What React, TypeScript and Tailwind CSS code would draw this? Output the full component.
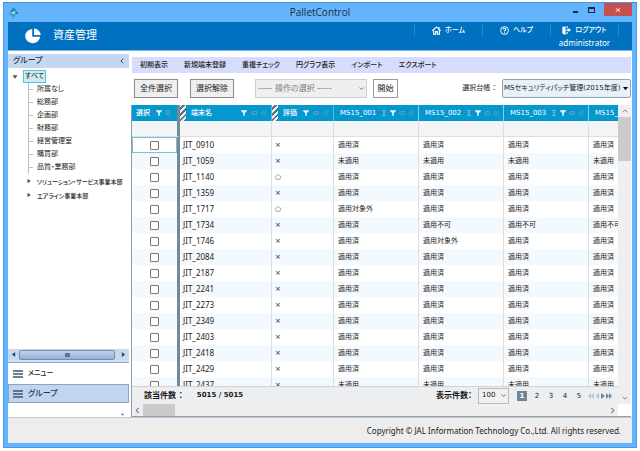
import type { ReactNode } from "react";

type Terminal = {
  name: string;
  rating: string;
  patches: string[];
};

const OK = "適用済";
const NOT_YET = "未適用";
const EXEMPT = "適用対象外";
const BLOCKED = "適用不可";

const allOk = (name: string): Terminal => ({ name, rating: "×", patches: [OK, OK, OK, OK] });

const terminals: Terminal[] = [
  allOk("JIT_0910"),
  { name: "JIT_1059", rating: "×", patches: [NOT_YET, NOT_YET, NOT_YET, NOT_YET] },
  { name: "JIT_1140", rating: "○", patches: [OK, OK, OK, OK] },
  allOk("JIT_1359"),
  { name: "JIT_1717", rating: "○", patches: [EXEMPT, OK, OK, OK] },
  { name: "JIT_1734", rating: "×", patches: [OK, BLOCKED, BLOCKED, BLOCKED] },
  { name: "JIT_1746", rating: "×", patches: [OK, EXEMPT, OK, OK] },
  allOk("JIT_2084"),
  allOk("JIT_2187"),
  allOk("JIT_2241"),
  allOk("JIT_2273"),
  allOk("JIT_2349"),
  allOk("JIT_2403"),
  allOk("JIT_2418"),
  allOk("JIT_2429"),
  { name: "JIT_2437", rating: "×", patches: [NOT_YET, NOT_YET, NOT_YET, NOT_YET] },
];

const departments = ["所属なし", "総務部", "企画部", "財務部", "経営管理室", "購買部", "品質・業務部"];
const divisions = ["ソリューション・サービス事業本部", "エアライン事業本部"];
const menuItems = ["初期表示", "新規端末登録", "重複チェック", "円グラフ表示", "インポート", "エクスポート"];
const patchColumns = ["MS15_001", "MS15_002", "MS15_003", "MS15_004"];

const Chevron = ({ d, className }: { d: string; className: string }) => (
  <svg viewBox="0 0 8 8" className={className} fill="none" stroke="currentColor" strokeWidth="1.2" aria-hidden="true">
    <path d={d} />
  </svg>
);

const AppIcon = () => (
  <svg viewBox="0 0 12 12" className="h-[11px] w-[11px]" aria-hidden="true">
    <path d="M6 0.5 10 4H7.5Q5.5 4 4.5 6L2.5 4.5Z" fill="#2587b5" />
    <path d="M0.8 5 4 7.8Q5.5 8.5 7 7L9.3 8.3 6 11.5 2 8.5Z" fill="#3c9cc4" />
    <path d="M8.5 4.5 11.5 6.5 9.8 8 7.5 6.5Z" fill="#1a76a8" />
    <circle cx="6.3" cy="6" r="1.2" fill="#d5effa" />
  </svg>
);

const PieIcon = () => (
  <svg viewBox="0 0 16 16" className="h-4 w-4" fill="#fff" aria-hidden="true">
    <path d="M7.2 0.9V8.8H15.2A7.5 7.2 0 1 1 7.2 0.9Z" />
    <path d="M9 0.6A6.8 6.6 0 0 1 15.6 7H9Z" />
  </svg>
);

const HomeIcon = () => (
  <svg viewBox="0 0 12 12" className="h-[9px] w-[9px]" fill="none" stroke="#fff" strokeWidth="1.5" aria-hidden="true">
    <path d="M0.5 6.3 6 1.2 11.5 6.3M2.2 5.5V11H4.8V7.5H7.2V11H9.8V5.5M9.3 3.8V1.3" />
  </svg>
);

const HelpIcon = () => (
  <svg viewBox="0 0 12 12" className="h-[9px] w-[9px]" fill="none" stroke="#fff" aria-hidden="true">
    <circle cx="6" cy="6" r="5.2" strokeWidth="1.3" />
    <path d="M4.2 4.6Q4.3 3 6 3T7.8 4.6Q7.8 5.6 6 6.2V7.4M6 8.2V9.5" strokeWidth="1.4" />
  </svg>
);

const LogoutIcon = () => (
  <svg viewBox="0 0 12 12" className="h-[9px] w-[9px]" fill="#fff" aria-hidden="true">
    <path d="M0.5 0.5 4.8 2V12L0.5 10Z" />
    <path d="M2 0.5H8V3H7V1.5H4ZM5 9H7V7.5H8V10H5Z" />
    <path d="M5.8 4.3H8.6V2.6L12 5.2 8.6 7.9V6.2H5.8Z" />
  </svg>
);

const FilterIcon = () => (
  <svg viewBox="0 0 6 6" className="h-[6px] w-[6px]" fill="#e4f3fa" aria-hidden="true">
    <path d="M0 0.3H6V1L3.8 3V5.8H2.2V3L0 1Z" />
  </svg>
);

const PinIcon = () => (
  <svg viewBox="0 0 6 6" className="h-[6px] w-[6px]" fill="none" stroke="#6c9fb5" strokeWidth="0.9" aria-hidden="true">
    <path d="M0 3H2M2 1.5V4.5H5.5V1.5Z" />
  </svg>
);

const UprightPinIcon = () => (
  <svg viewBox="0 0 6 6" className="h-[6px] w-[6px]" fill="none" stroke="#6c9fb5" strokeWidth="0.9" aria-hidden="true">
    <path d="M1.5 0.5H4.5V4H1.5ZM3 4V6" />
  </svg>
);

const CollapseIcon = () => (
  <svg viewBox="0 0 6 6" className="h-[6px] w-[6px]" fill="none" stroke="#6c9fb5" strokeWidth="0.9" aria-hidden="true">
    <path d="M3 0.5 0.8 3 3 5.5M5.7 0.5 3.5 3 5.7 5.5" />
  </svg>
);

const SumIcon = () => (
  <svg viewBox="0 0 6 6" className="h-[6px] w-[6px]" fill="none" stroke="#8fb5c4" strokeWidth="0.9" aria-hidden="true">
    <path d="M1 0.5H5M3 1V5M1 5.5H5M2 3H4" />
  </svg>
);

const NavItem = ({ icon, label, user }: { icon: ReactNode; label: string; user?: string }) => (
  <div className="h-3 w-[68px] border-l border-[#3c82bd]">
    <a href="#" className="flex h-3 items-center justify-center gap-1 text-[7px] font-medium whitespace-nowrap">
      {icon}
      {label}
    </a>
    {user && <div className="text-center font-['Noto_Sans',sans-serif] text-[8px] leading-[14px] whitespace-nowrap">{user}</div>}
  </div>
);

const ListIcon = () => (
  <svg viewBox="0 0 10 8" className="h-2 w-[10px]" stroke="#40566f" strokeWidth="1.4" aria-hidden="true">
    <path d="M0 1H10M0 4H10M0 7H10" />
  </svg>
);

const Sidebar = () => (
  <aside className="mt-[3px] flex w-[121px] shrink-0 flex-col">
    <div className="flex h-[14px] shrink-0 items-center justify-between bg-[#c5d7ee] pr-1 pl-[5px] text-[8px] font-medium text-[#1e395b]">
      グループ
      <button type="button" aria-label="閉じる">
        <Chevron d="M5.5 1 2.5 4 5.5 7" className="h-[6px] w-[6px]" />
      </button>
    </div>
    <ul className="min-h-0 flex-1 overflow-hidden pt-[2px] text-[7px] whitespace-nowrap">
      <li>
        <div className="flex h-[13px] items-center gap-[5px] pl-1">
          <svg viewBox="0 0 6 6" className="h-[6px] w-[6px]" fill="#555" aria-hidden="true">
            <path d="M0.5 1.2H5.5L3 4.8Z" />
          </svg>
          <span className="flex h-[13px] items-center border border-[#4fc3dc] bg-[#cfeaf3] px-px text-[7px]">すべて</span>
        </div>
        <ul className="ml-5">
          {departments.map((name) => (
            <li key={name} className="flex h-[13px] items-center gap-1 border-l border-[#b9bec4]">
              <span className="h-px w-1 bg-[#b9bec4]" />
              {name}
            </li>
          ))}
          {divisions.map((name) => (
            <li key={name} className="-ml-1 flex h-[14px] items-center gap-[5px] pl-[2px] text-[6px] font-medium">
              <svg viewBox="0 0 6 6" className="h-[6px] w-[6px] shrink-0" fill="#555" aria-hidden="true">
                <path d="M1.5 0.8V5.2L4.8 3Z" />
              </svg>
              {name}
            </li>
          ))}
        </ul>
      </li>
    </ul>
    <div className="flex h-[11px] shrink-0 items-center bg-[#c9d8ec] text-[#2c4c74]">
      <svg viewBox="0 0 6 6" className="mx-[3px] h-[5px] w-[5px]" fill="currentColor" aria-hidden="true">
        <path d="M5 0V6L1 3Z" />
      </svg>
      <div className="flex h-[10px] flex-1 items-center justify-center rounded-xs border border-[#6f8db5] bg-linear-to-b from-[#c3d4ea] to-[#93b0d8]">
        <div className="h-1 w-[5px] bg-[#54739e]" />
      </div>
      <svg viewBox="0 0 6 6" className="mr-[3px] ml-[6px] h-[5px] w-[5px]" fill="currentColor" aria-hidden="true">
        <path d="M1 0V6L5 3Z" />
      </svg>
    </div>
    <div className="h-[3px] shrink-0 border-b border-[#8fa9ca] bg-[#d3e0f1]" />
    <button type="button" className="flex h-[21px] shrink-0 items-center gap-[5px] pl-[5px] text-[7px] font-medium">
      <ListIcon />
      メニュー
    </button>
    <button
      type="button"
      className="flex h-[19px] shrink-0 items-center gap-[5px] border border-[#8ba5c8] bg-[#c3d5ec] pl-1 text-[8px] font-medium text-[#1e395b]"
    >
      <ListIcon />
      グループ
    </button>
    <div className="flex h-[14px] shrink-0 items-center justify-end pt-2 pr-[5px]">
      <svg viewBox="0 0 4 4" className="h-[3px] w-[3px]" fill="#3c6797" aria-hidden="true">
        <path d="M0 1H4L2 3.5Z" />
      </svg>
    </div>
  </aside>
);

const Toolbar = () => (
  <div className="mt-[6px] flex h-[19px] shrink-0 items-center pl-[3px] text-[8px] whitespace-nowrap">
    <button type="button" className="h-[19px] w-11 border border-[#8b8b8b] bg-[#efefef]">
      全件選択
    </button>
    <button type="button" className="ml-3 h-[19px] w-11 border border-[#8b8b8b] bg-[#efefef]">
      選択解除
    </button>
    <div className="relative ml-[21px]">
      <select
        aria-label="操作の選択"
        disabled
        className="block h-[19px] w-[112px] appearance-none border border-[#cfcfcf] bg-[#efefef] pl-[2px] text-[#7c7c7c] opacity-100"
      >
        <option>----- 操作の選択 -----</option>
      </select>
      <Chevron d="M1 2.5 4 5.5 7 2.5" className="absolute top-[7px] right-[3px] h-[5px] w-[5px] text-[#555]" />
    </div>
    <button type="button" className="ml-[6px] h-[19px] w-[25px] border border-[#9a9a9a] bg-[#fdfdfd]">
      開始
    </button>
    <label htmlFor="ledger" className="mr-[6px] ml-auto text-[7px]">
      選択台帳 ：
    </label>
    <div className="relative">
      <select
        id="ledger"
        className="block h-[19px] w-[129px] appearance-none rounded-xs border border-[#8fa3b5] bg-[#e8f0f8] pl-px text-[7px]"
      >
        <option>MSセキュリティパッチ管理(2015年度)</option>
      </select>
      <svg viewBox="0 0 6 6" className="absolute top-[7px] right-[3px] h-[5px] w-[5px]" aria-hidden="true">
        <path d="M0 1.2H6L3 5Z" />
      </svg>
    </div>
  </div>
);

const Stripes = () => (
  <span className="h-4 w-[6px] shrink-0 bg-[repeating-linear-gradient(135deg,#e9eef1_0px,#e9eef1_2px,#5c7280_2px,#5c7280_4px)]" />
);

const TerminalTable = () => (
  <table className="w-[541px] table-fixed border-separate border-spacing-0 text-left text-[7px] whitespace-nowrap">
    <colgroup>
      <col className="w-12" />
      <col className="w-[92px]" />
      <col className="w-[62px]" />
      {patchColumns.map((name) => (
        <col key={name} className="w-[85px]" />
      ))}
    </colgroup>
    <thead className="text-white">
      <tr className="h-4 bg-[#0598cf]">
        <th className="border-r-3 border-[#73899a] p-0 font-medium">
          <div className="flex items-center gap-[3px] pl-1">
            <span className="mr-[3px]">選択</span>
            <FilterIcon />
            <UprightPinIcon />
          </div>
        </th>
        <th className="border-r border-[#58b6da] p-0 font-medium">
          <div className="flex items-center gap-1 pr-1">
            <Stripes />
            <span className="mr-auto pl-px">端末名</span>
            <FilterIcon />
            <PinIcon />
            <CollapseIcon />
          </div>
        </th>
        <th className="border-r border-[#58b6da] p-0 font-medium">
          <div className="flex items-center gap-1 pr-1">
            <Stripes />
            <span className="mr-auto pl-px">評価</span>
            <FilterIcon />
            <PinIcon />
            <CollapseIcon />
          </div>
        </th>
        {patchColumns.map((name) => (
          <th key={name} className="border-r border-[#8ccbe4] p-0 font-medium">
            <div className="flex items-center gap-[3px] pr-1 pl-[6px]">
              <span className="mr-auto">{name}</span>
              <SumIcon />
              <FilterIcon />
              <PinIcon />
              <CollapseIcon />
            </div>
          </th>
        ))}
      </tr>
      <tr className="h-4 bg-[#f3f4f5]">
        <td className="border-r-3 border-b border-[#73899a] border-b-[#dcdfe2] p-0" />
        {[0, 1, 2, 3, 4, 5].map((i) => (
          <td key={i} className="border-r border-b border-[#dcdfe2] p-0" />
        ))}
      </tr>
    </thead>
    <tbody>
      {terminals.map((t, i) => (
        <tr key={t.name} className="h-4 even:bg-[#f4f9fd]">
          <td className="border-r-3 border-[#73899a] p-0">
            <div className={i === 0 ? "flex h-4 items-center justify-center border border-[#7cc0d6]" : "flex h-4 items-center justify-center"}>
              <input
                type="checkbox"
                aria-label={t.name}
                className="h-[9px] w-[9px] appearance-none rounded-[1px] border border-[#777] bg-white"
              />
            </div>
          </td>
          <td className="border-r border-[#dcdfe2] py-0 pr-0 pl-[3px] font-['Noto_Sans',sans-serif] text-[8px] leading-4">
            {t.name}
          </td>
          <td className="border-r border-[#dcdfe2] py-0 pr-0 pl-[3px] leading-4">{t.rating}</td>
          {t.patches.map((status, j) => (
            <td key={j} className="border-r border-[#dcdfe2] py-0 pr-0 pl-1 leading-4">
              {status}
            </td>
          ))}
        </tr>
      ))}
    </tbody>
  </table>
);

const Pager = () => (
  <div className="flex h-[18px] shrink-0 items-center border-t border-[#cdd2d6] bg-[#eceef0] pl-3 text-[7px] whitespace-nowrap">
    <span className="text-[8px] font-bold">該当件数 ：</span>
    <span className="ml-[14px] font-bold">5015 / 5015</span>
    <label htmlFor="page-size" className="mr-[6px] ml-auto text-[8px] font-bold">
      表示件数：
    </label>
    <div className="relative">
      <select id="page-size" className="block h-4 w-[31px] appearance-none border border-[#b8bcc0] bg-[#f0f0f0] pl-[3px]">
        <option>100</option>
      </select>
      <Chevron d="M1 2.5 4 5.5 7 2.5" className="absolute top-[5px] right-[3px] h-[5px] w-[5px] text-[#444]" />
    </div>
    <div className="ml-2 flex items-center">
      <button type="button" className="mr-[3px] h-[10px] w-[10px] bg-[#6d8799] leading-[10px] font-bold text-white">
        1
      </button>
      {[2, 3, 4, 5].map((page) => (
        <button key={page} type="button" className="h-[10px] w-[14px] leading-[10px]">
          {page}
        </button>
      ))}
    </div>
    <svg viewBox="0 0 24 6" className="mr-[6px] ml-[2px] h-[6px] w-6" aria-hidden="true">
      <path d="M3 0V6L0 3ZM6 0V6L3 3ZM11 0V6L7.5 3Z" fill="#b6c4cf" />
      <path d="M13 0V6L17 3ZM18 0V6L21 3ZM21 0V6L24 3Z" fill="#6d8799" />
    </svg>
  </div>
);

const App = () => {
  return (
    <div className="flex h-screen bg-white px-[3px] pt-[2px] pb-[3px] font-['DejaVu_Sans','Noto_Sans_CJK_JP',sans-serif] text-[#1a1a1a] [font-feature-settings:'palt']">
      <div className="flex min-w-0 flex-1 flex-col border border-[#4196e6] bg-[#63b3fd] px-1 pb-1">
        <div className="relative flex h-[19px] shrink-0 items-center">
          <AppIcon />
          <h1 className="flex-1 pr-[11px] text-center font-['Open_Sans',sans-serif] text-[10px] text-[#1c2b3a]">PalletControl</h1>
          <div className="absolute top-0 right-0 flex items-center">
            <button type="button" aria-label="最小化" className="flex h-[13px] w-4 items-center justify-center">
              <span className="mt-1 h-[2px] w-[5px] bg-[#12283e]" />
            </button>
            <button type="button" aria-label="最大化" className="mr-[5px] flex h-[13px] w-4 items-center justify-center">
              <span className="h-[6px] w-[7px] border border-t-2 border-[#12283e]" />
            </button>
            <button type="button" aria-label="閉じる" className="flex h-[13px] w-7 items-center justify-center bg-[#c7504f]">
              <Chevron d="M1 1.5 7 6.5M7 1.5 1 6.5" className="h-[6px] w-[6px] text-white" />
            </button>
          </div>
        </div>

        <header className="flex h-[29px] shrink-0 items-center border-b border-[#7fb4e0] bg-[#0070c0] text-white">
          <div className="mr-3 ml-[17px]">
            <PieIcon />
          </div>
          <h2 className="text-[11px]">資産管理</h2>
          <nav className="mt-[2px] mr-[13px] ml-auto flex self-start">
            <NavItem icon={<HomeIcon />} label="ホーム" />
            <NavItem icon={<HelpIcon />} label="ヘルプ" />
            <NavItem icon={<LogoutIcon />} label="ログアウト" user="administrator" />
            <div className="h-3 border-l border-[#3c82bd]" />
          </nav>
        </header>

        <div className="flex min-h-0 flex-1 bg-white">
          <Sidebar />
          <main className="ml-[2px] flex min-w-0 flex-1 flex-col pt-[6px] pr-px">
            <nav className="ml-px flex h-4 shrink-0 items-center gap-4 bg-[#d6dcfc] pl-2 text-[7px] font-medium whitespace-nowrap">
              {menuItems.map((item) => (
                <a key={item} href="#">
                  {item}
                </a>
              ))}
            </nav>
            <Toolbar />
            <section className="mt-[7px] flex min-h-0 flex-1 flex-col border-b border-l border-[#8b9fb0]">
              <div className="flex min-h-0 flex-1">
                <div className="flex min-w-0 flex-1 flex-col">
                  <div className="min-h-0 flex-1 overflow-hidden">
                    <TerminalTable />
                  </div>
                  <Pager />
                </div>
                <div className="flex w-[13px] shrink-0 flex-col items-center bg-[#efefef] text-[#777]">
                  <Chevron d="M1 5.5 4 2.5 7 5.5" className="my-[3px] h-[6px] w-[6px]" />
                  <div className="mb-auto h-[44px] w-full bg-[#cbcbcb]" />
                  <Chevron d="M1 2.5 4 5.5 7 2.5" className="my-[3px] h-[6px] w-[6px]" />
                </div>
              </div>
              <div className="flex h-3 shrink-0 pr-[13px] text-[#777]">
                <div className="flex flex-1 items-center bg-[#efefef]">
                  <Chevron d="M5.5 1 2.5 4 5.5 7" className="mx-[2px] h-[7px] w-[7px]" />
                  <div className="h-3 w-8 bg-[#cbcbcb]" />
                  <Chevron d="M2.5 1 5.5 4 2.5 7" className="mr-[2px] ml-auto h-[7px] w-[7px]" />
                </div>
              </div>
            </section>
          </main>
        </div>

        <footer className="flex h-[26px] shrink-0 items-center justify-end border-t border-[#c4c9ce] bg-[#ededed] pr-[11px] font-['Noto_Sans',sans-serif] text-[8px] whitespace-nowrap">
          Copyright © JAL Information Technology Co.,Ltd. All rights reserved.
        </footer>
      </div>
    </div>
  );
};

export default App;
